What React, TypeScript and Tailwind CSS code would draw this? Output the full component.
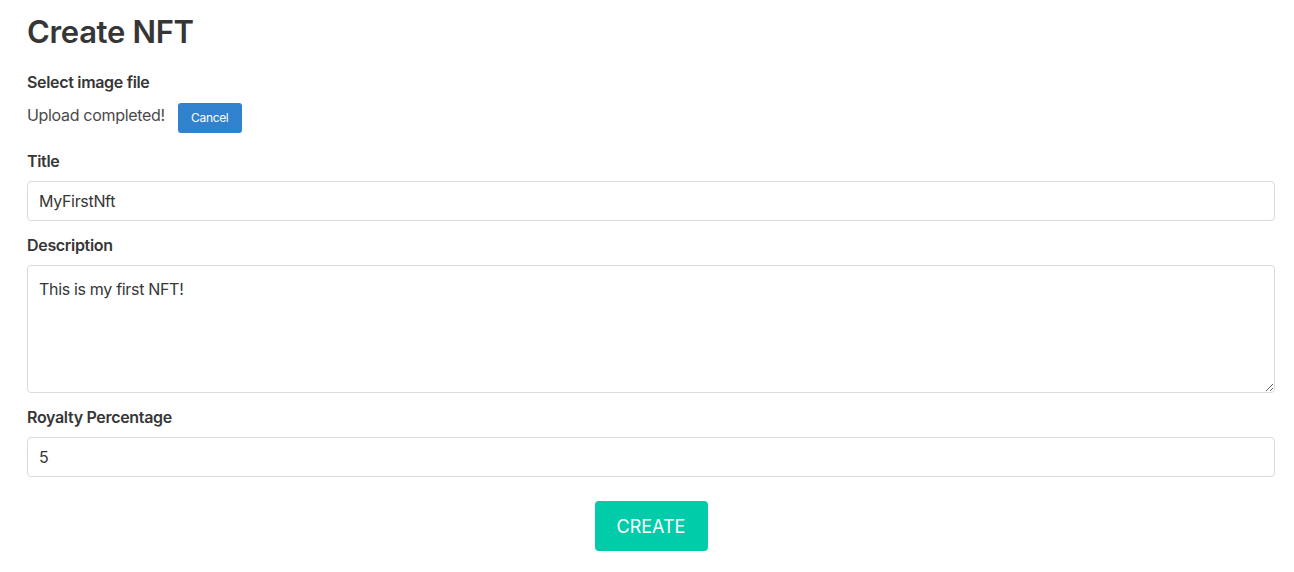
export default function App() {
  const font = { fontFamily: 'Inter, "Noto Sans", sans-serif', letterSpacing: '-0.02em' };
  return (
    <div className="min-h-screen bg-white pl-[27px] pr-[19px] pt-[14px] text-[#4a4a4a]" style={font}>
      <h1 className="text-[31px] font-semibold leading-[36px] text-[#363636]">Create NFT</h1>
      <div className="mt-[20px]">
        <label className="block text-[16px] font-semibold leading-[24px] text-[#363636]">Select image file</label>
        <div className="mt-[3px] flex items-center gap-[13px]">
          <span className="text-[16px] leading-[24px]">Upload completed!</span>
          <button className="mt-[6px] h-[30px] w-[64px] rounded-[3px] bg-[#3182ce] text-[12px] text-white">Cancel</button>
        </div>
      </div>
      <div className="mt-[16px]">
        <label className="block text-[16px] font-semibold leading-[24px] text-[#363636]">Title</label>
        <input
          defaultValue="MyFirstNft"
          className="mt-[8px] block h-[40px] w-full rounded-[4px] border border-[#dbdbdb] px-[11px] text-[16px] text-[#363636] outline-none"
          style={font}
        />
      </div>
      <div className="mt-[12px]">
        <label className="block text-[16px] font-semibold leading-[24px] text-[#363636]">Description</label>
        <textarea
          defaultValue="This is my first NFT!"
          className="mt-[8px] block h-[128px] w-full rounded-[4px] border border-[#dbdbdb] px-[11px] pt-[11px] text-[16px] leading-[24px] text-[#363636] outline-none"
          style={font}
        />
      </div>
      <div className="mt-[12px]">
        <label className="block text-[16px] font-semibold leading-[24px] text-[#363636]">Royalty Percentage</label>
        <input
          defaultValue="5"
          className="mt-[8px] block h-[40px] w-full rounded-[4px] border border-[#dbdbdb] px-[11px] text-[16px] text-[#363636] outline-none"
          style={font}
        />
      </div>
      <div className="mt-[24px] flex justify-center">
        <button className="h-[50px] w-[113px] rounded-[4px] bg-[#00cca9] text-[18px] tracking-normal text-white">CREATE</button>
      </div>
    </div>
  );
}
